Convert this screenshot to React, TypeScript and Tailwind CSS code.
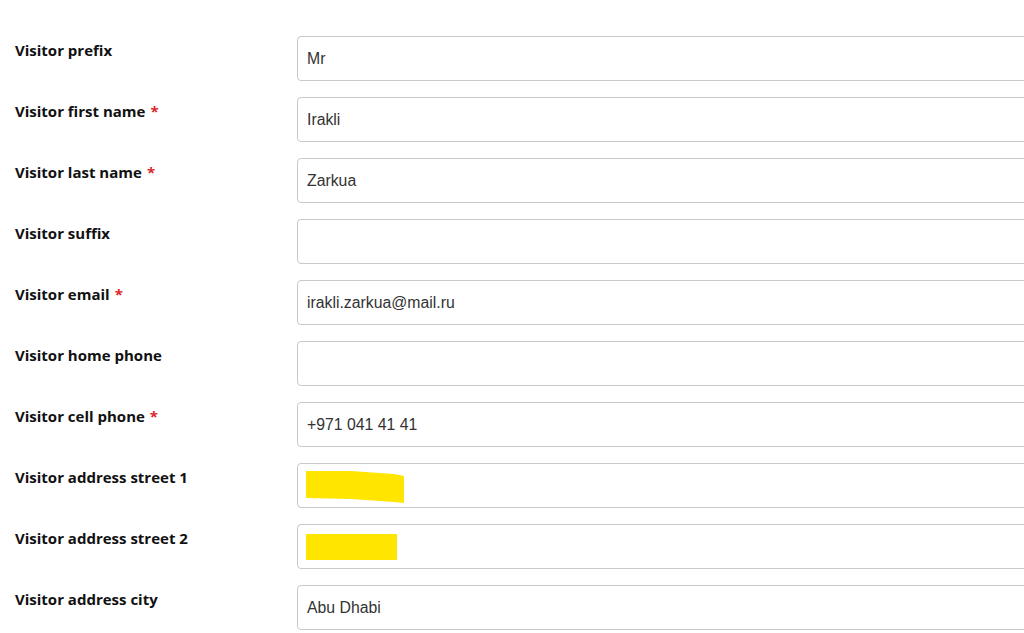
const fields = [
  { label: 'Visitor prefix', value: 'Mr' },
  { label: 'Visitor first name', value: 'Irakli', required: true },
  { label: 'Visitor last name', value: 'Zarkua', required: true },
  { label: 'Visitor suffix', value: '' },
  { label: 'Visitor email', value: 'irakli.zarkua@mail.ru', required: true },
  { label: 'Visitor home phone', value: '' },
  { label: 'Visitor cell phone', value: '+971 041 41 41', required: true },
  { label: 'Visitor address street 1', value: '', mark: 'slant' },
  { label: 'Visitor address street 2', value: '', mark: 'rect' },
  { label: 'Visitor address city', value: 'Abu Dhabi' },
]

export default function App() {
  return (
    <div className="w-[1024px] h-[633px] overflow-hidden bg-white pt-[36px]">
      <div className="flex flex-col gap-[16px]">
        {fields.map((f) => (
          <div key={f.label} className="flex">
            <div className="w-[297px] shrink-0 pl-[15px] pt-[2px] text-[15px] leading-[24px] font-bold text-[#111] font-['Open_Sans',sans-serif]">
              {f.label}
              {f.required && <span className="text-[#d9262a] ml-[5px]">*</span>}
            </div>
            <div className="relative w-[760px] shrink-0 h-[45px] border border-[#c9c9c9] rounded-[4px] flex items-center pl-[9px] text-[15.8px] text-[#333] font-['Liberation_Sans',Arial,sans-serif]">
              {f.value}
              {f.mark === 'slant' && (
                <svg className="absolute left-[8px] top-[6px]" width="100" height="34" viewBox="0 0 100 34">
                  <path d="M0 1 L45 1 L88 4 L98 6 L98 33 L88 32 L45 29 L0 28 Z" fill="#ffe500" />
                </svg>
              )}
              {f.mark === 'rect' && (
                <div className="absolute left-[8px] top-[9px] w-[91px] h-[26px] bg-[#ffe500]" />
              )}
            </div>
          </div>
        ))}
      </div>
    </div>
  )
}
